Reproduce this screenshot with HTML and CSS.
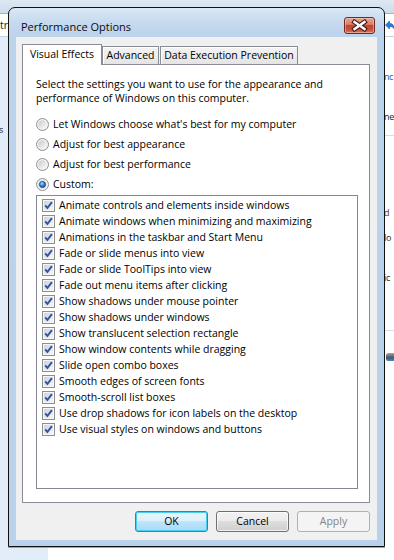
FILE: index.html
```html
<!DOCTYPE html>
<html>
<head>
<meta charset="utf-8">
<link rel="stylesheet" href="styles.css">
</head>
<body>
<svg class="defs" width="0" height="0" aria-hidden="true">
  <defs>
    <linearGradient id="cbFill" x1="0" y1="0" x2="1" y2="1">
      <stop offset="0" stop-color="#cfd2d6"/>
      <stop offset="1" stop-color="#f7f7f7"/>
    </linearGradient>
    <linearGradient id="rbFill" x1="0" y1="0" x2="1" y2="1">
      <stop offset="0" stop-color="#c9c9c9"/>
      <stop offset="1" stop-color="#fbfbfb"/>
    </linearGradient>
    <radialGradient id="dotFill" cx="0.4" cy="0.35" r="0.7">
      <stop offset="0" stop-color="#b9e2ff"/>
      <stop offset="0.45" stop-color="#3b8ee0"/>
      <stop offset="1" stop-color="#103d8c"/>
    </radialGradient>
    <symbol id="cb" viewBox="0 0 13 13">
      <rect x="0.5" y="0.5" width="12" height="12" fill="#f6f6f6" stroke="#8f8f8f"/>
      <rect x="2" y="2" width="9" height="9" fill="url(#cbFill)"/>
      <path d="M3.2 6.4 L5.4 9 L9.9 3.2" fill="none" stroke="#2f54a8" stroke-width="2" stroke-linejoin="miter"/>
    </symbol>
    <symbol id="rb" viewBox="0 0 13 13">
      <circle cx="6.5" cy="6.5" r="6" fill="#f3f3f3" stroke="#8e8f8f"/>
      <circle cx="6.5" cy="6.5" r="4.3" fill="url(#rbFill)"/>
    </symbol>
    <symbol id="rbs" viewBox="0 0 13 13">
      <circle cx="6.5" cy="6.5" r="6" fill="#f3f3f3" stroke="#8e8f8f"/>
      <circle cx="6.5" cy="6.5" r="4.3" fill="url(#rbFill)"/>
      <circle cx="6.5" cy="6.5" r="3.1" fill="url(#dotFill)" stroke="#16407f" stroke-width="0.7"/>
    </symbol>
  </defs>
</svg>

<div class="screen">
  <div class="bg">
    <div class="bg-top"></div>
    <div class="bg-toolbar">
      <span class="addr-text">tr</span>
      <svg class="refresh" viewBox="0 0 9 12">
        <path d="M0.5 5 L4.5 1 L4.5 3.4 Q9 3.4 9 8.5 Q7.5 6.2 4.5 6.4 L4.5 9 Z" fill="#2a7be0" stroke="#1550a8" stroke-width="0.6"/>
      </svg>
    </div>
    <div class="bg-main">
      <div class="nav">
        <div class="nav-item">s</div>
      </div>
      <div class="content">
        <div class="frag heading">nc</div>
        <div class="frag text">ne</div>
        <div class="frag rule"></div>
        <div class="frag text d">d</div>
        <div class="frag text lo">lo</div>
        <div class="frag text ic">ic</div>
        <div class="frag rule low"></div>
        <div class="frag icon"><span class="printer"></span></div>
      </div>
    </div>
  </div>

  <div class="window">
    <div class="titlebar">
      <span class="title">Performance Options</span>
      <div class="close">
        <svg viewBox="0 0 31 17" width="31" height="17">
          <path d="M10.5 5 L20.5 12 M20.5 5 L10.5 12" stroke="#4b1e1a" stroke-width="4.6" stroke-linecap="square" fill="none"/>
          <path d="M10.5 5 L20.5 12 M20.5 5 L10.5 12" stroke="#ffffff" stroke-width="2.4" stroke-linecap="square" fill="none"/>
        </svg>
      </div>
    </div>
    <div class="client">
      <div class="tabs">
        <div class="tab active">Visual Effects</div>
        <div class="tab adv">Advanced</div>
        <div class="tab dep">Data Execution Prevention</div>
      </div>
      <div class="panel">
        <p class="intro">Select the settings you want to use for the appearance and<br>performance of Windows on this computer.</p>
        <div class="radios">
          <div class="radio"><svg class="rb"><use href="#rb"/></svg><span>Let Windows choose what's best for my computer</span></div>
          <div class="radio"><svg class="rb"><use href="#rb"/></svg><span>Adjust for best appearance</span></div>
          <div class="radio"><svg class="rb"><use href="#rb"/></svg><span>Adjust for best performance</span></div>
          <div class="radio"><svg class="rb"><use href="#rbs"/></svg><span>Custom:</span></div>
        </div>
        <div class="list">
          <div class="item"><svg class="cb"><use href="#cb"/></svg><span>Animate controls and elements inside windows</span></div>
          <div class="item"><svg class="cb"><use href="#cb"/></svg><span>Animate windows when minimizing and maximizing</span></div>
          <div class="item"><svg class="cb"><use href="#cb"/></svg><span>Animations in the taskbar and Start Menu</span></div>
          <div class="item"><svg class="cb"><use href="#cb"/></svg><span>Fade or slide menus into view</span></div>
          <div class="item"><svg class="cb"><use href="#cb"/></svg><span>Fade or slide ToolTips into view</span></div>
          <div class="item"><svg class="cb"><use href="#cb"/></svg><span>Fade out menu items after clicking</span></div>
          <div class="item"><svg class="cb"><use href="#cb"/></svg><span>Show shadows under mouse pointer</span></div>
          <div class="item"><svg class="cb"><use href="#cb"/></svg><span>Show shadows under windows</span></div>
          <div class="item"><svg class="cb"><use href="#cb"/></svg><span>Show translucent selection rectangle</span></div>
          <div class="item"><svg class="cb"><use href="#cb"/></svg><span>Show window contents while dragging</span></div>
          <div class="item"><svg class="cb"><use href="#cb"/></svg><span>Slide open combo boxes</span></div>
          <div class="item"><svg class="cb"><use href="#cb"/></svg><span>Smooth edges of screen fonts</span></div>
          <div class="item"><svg class="cb"><use href="#cb"/></svg><span>Smooth-scroll list boxes</span></div>
          <div class="item"><svg class="cb"><use href="#cb"/></svg><span>Use drop shadows for icon labels on the desktop</span></div>
          <div class="item"><svg class="cb"><use href="#cb"/></svg><span>Use visual styles on windows and buttons</span></div>
        </div>
      </div>
      <div class="buttons">
        <div class="btn default">OK</div>
        <div class="btn">Cancel</div>
        <div class="btn disabled">Apply</div>
      </div>
    </div>
  </div>
</div>
</body>
</html>
```

FILE: styles.css
```css
* { box-sizing: border-box; }
html, body { margin: 0; padding: 0; }
body {
  width: 394px;
  height: 560px;
  overflow: hidden;
  background: #fff;
  font-family: "Open Sans", "Noto Sans", sans-serif;
  font-size: 10.5px;
  color: #000;
}
.defs { position: absolute; width: 0; height: 0; overflow: hidden; }

.screen { position: relative; width: 394px; height: 560px; overflow: hidden; }

/* ---------- background window ---------- */
.bg { display: flex; flex-direction: column; height: 100%; }
.bg-top {
  height: 14px;
  background: linear-gradient(#dde8f4, #cfdcea);
  border-bottom: 1px solid #9fb3ca;
}
.bg-toolbar {
  height: 23px;
  display: flex;
  align-items: center;
  background: #fff;
  border-bottom: 1px solid #c3d1e1;
}
.addr-text { color: #1a1a1a; white-space: nowrap; }
.refresh { width: 9px; height: 12px; margin-left: auto; margin-right: 0; margin-top: 2px; }
.bg-main { flex: 1; display: flex; }
.nav { width: 48px; background: #e3edf9; padding-top: 86px; }
.nav-item { margin-left: -1px; color: #1a1a1a; line-height: 14px; font-size: 9px; }
.content { flex: 1; padding-left: 336px; padding-top: 33px; white-space: nowrap; overflow: hidden; }
.frag { line-height: 14px; }
.heading { color: #1f52b0; font-size: 9px; letter-spacing: -0.4px; height: 18px; }
.text { color: #1a1a1a; height: 14px; font-size: 9px; letter-spacing: -0.3px; }
.frag.text:nth-child(2) { margin-top: 22px; }
.rule { height: 1px; background: #d6dde6; margin-top: 11px; }
.d { margin-top: 70px; color: #5a2a2a; }
.lo { margin-top: 11px; }
.ic { margin-top: 26px; }
.rule.low { margin-top: 45px; }
.icon { margin-top: 22px; height: 14px; }
.printer {
  display: block;
  width: 10px; height: 8px;
  margin-left: 2px;
  background: linear-gradient(#9aa2ab, #4b5560 60%, #3a8fd0);
  border-radius: 3px 0 0 2px;
}

/* ---------- dialog window ---------- */
.window {
  position: absolute;
  left: 8px;
  top: 7px;
  width: 377px;
  height: 540px;
  border: 1px solid #111;
  border-radius: 7px 7px 0 0;
  background: linear-gradient(#dce8f5 0px, #c6daef 14px, #bcd3ec 28px, #b9d1ea 100%);
  display: flex;
  flex-direction: column;
  box-shadow: 0 1px 0 #38cde6;
}
.titlebar {
  height: 29px;
  flex: none;
  display: flex;
  align-items: flex-start;
  justify-content: space-between;
  padding: 9px 9px 0 12px;
}
.title { font-size: 11px; line-height: 15px; color: #0a0a0a; margin-top: 2px; }
.close {
  width: 31px;
  height: 17px;
  border: 1px solid #6e2a24;
  border-radius: 3px;
  background: linear-gradient(#e7a593 0%, #d9806d 42%, #c4452f 50%, #c95340 80%, #d87a60 100%);
  box-shadow: inset 0 0 0 1px rgba(255, 220, 210, 0.45);
  position: relative;
  overflow: hidden;
}
.close svg { position: absolute; left: -1px; top: -1px; }

.client {
  flex: 1;
  margin: 0 7px 6px 7px;
  background: #f0f0f0;
  display: flex;
  flex-direction: column;
  padding: 7px 7px 8px 6px;
}

/* tabs */
.tabs {
  height: 20px;
  flex: none;
  display: flex;
  align-items: flex-end;
  position: relative;
  z-index: 1;
}
.tab {
  height: 18px;
  border: 1px solid #898c95;
  border-bottom: none;
  background: linear-gradient(#f4f4f4, #e4e4e4);
  box-shadow: inset 1px 1px 0 #fff;
  text-align: center;
  line-height: 16px;
  white-space: nowrap;
}
.tab.active {
  width: 80px;
  height: 21px;
  margin-bottom: -1px;
  background: #fff;
  box-shadow: none;
  line-height: 19px;
}
.tab.adv { width: 57px; }
.tab.dep { width: 138px; margin-left: 1px; }

.panel {
  flex: 1;
  border: 1px solid #898c95;
  background: #fff;
  padding: 12px 11px 0 13px;
  display: flex;
  flex-direction: column;
}
.intro { margin: 0; line-height: 14px; white-space: nowrap; }
.radios { margin-top: 9px; display: flex; flex-direction: column; }
.radio { height: 20px; display: flex; align-items: center; gap: 4px; white-space: nowrap; }
.rb { width: 13px; height: 13px; flex: none; }

.list {
  margin-top: 1px;
  height: 294px;
  border: 1px solid #828790;
  background: #fff;
  display: flex;
  flex-direction: column;
  padding-top: 1px;
}
.item { height: 16px; display: flex; align-items: center; gap: 4px; padding-left: 5px; white-space: nowrap; }
.cb { width: 13px; height: 13px; flex: none; }

/* buttons */
.buttons {
  margin-top: 8px;
  height: 21px;
  flex: none;
  display: flex;
  justify-content: flex-end;
  gap: 8px;
}
.btn {
  width: 73px;
  height: 21px;
  border: 1px solid #707070;
  border-radius: 3px;
  background: linear-gradient(#f2f2f2 0%, #ebebeb 50%, #dddddd 50%, #cfcfcf 100%);
  box-shadow: inset 0 0 0 1px rgba(255, 255, 255, 0.7);
  text-align: center;
  line-height: 19px;
}
.btn.default {
  border-color: #3c7fb1;
  background: linear-gradient(#eaf6fd 0%, #d9f0fc 50%, #bee6fd 50%, #a7d9f5 100%);
  box-shadow: inset 0 0 0 1px #48d0f4;
}
.btn.disabled {
  border-color: #adb2b5;
  background: #f4f4f4;
  box-shadow: none;
  color: #838383;
}
```
